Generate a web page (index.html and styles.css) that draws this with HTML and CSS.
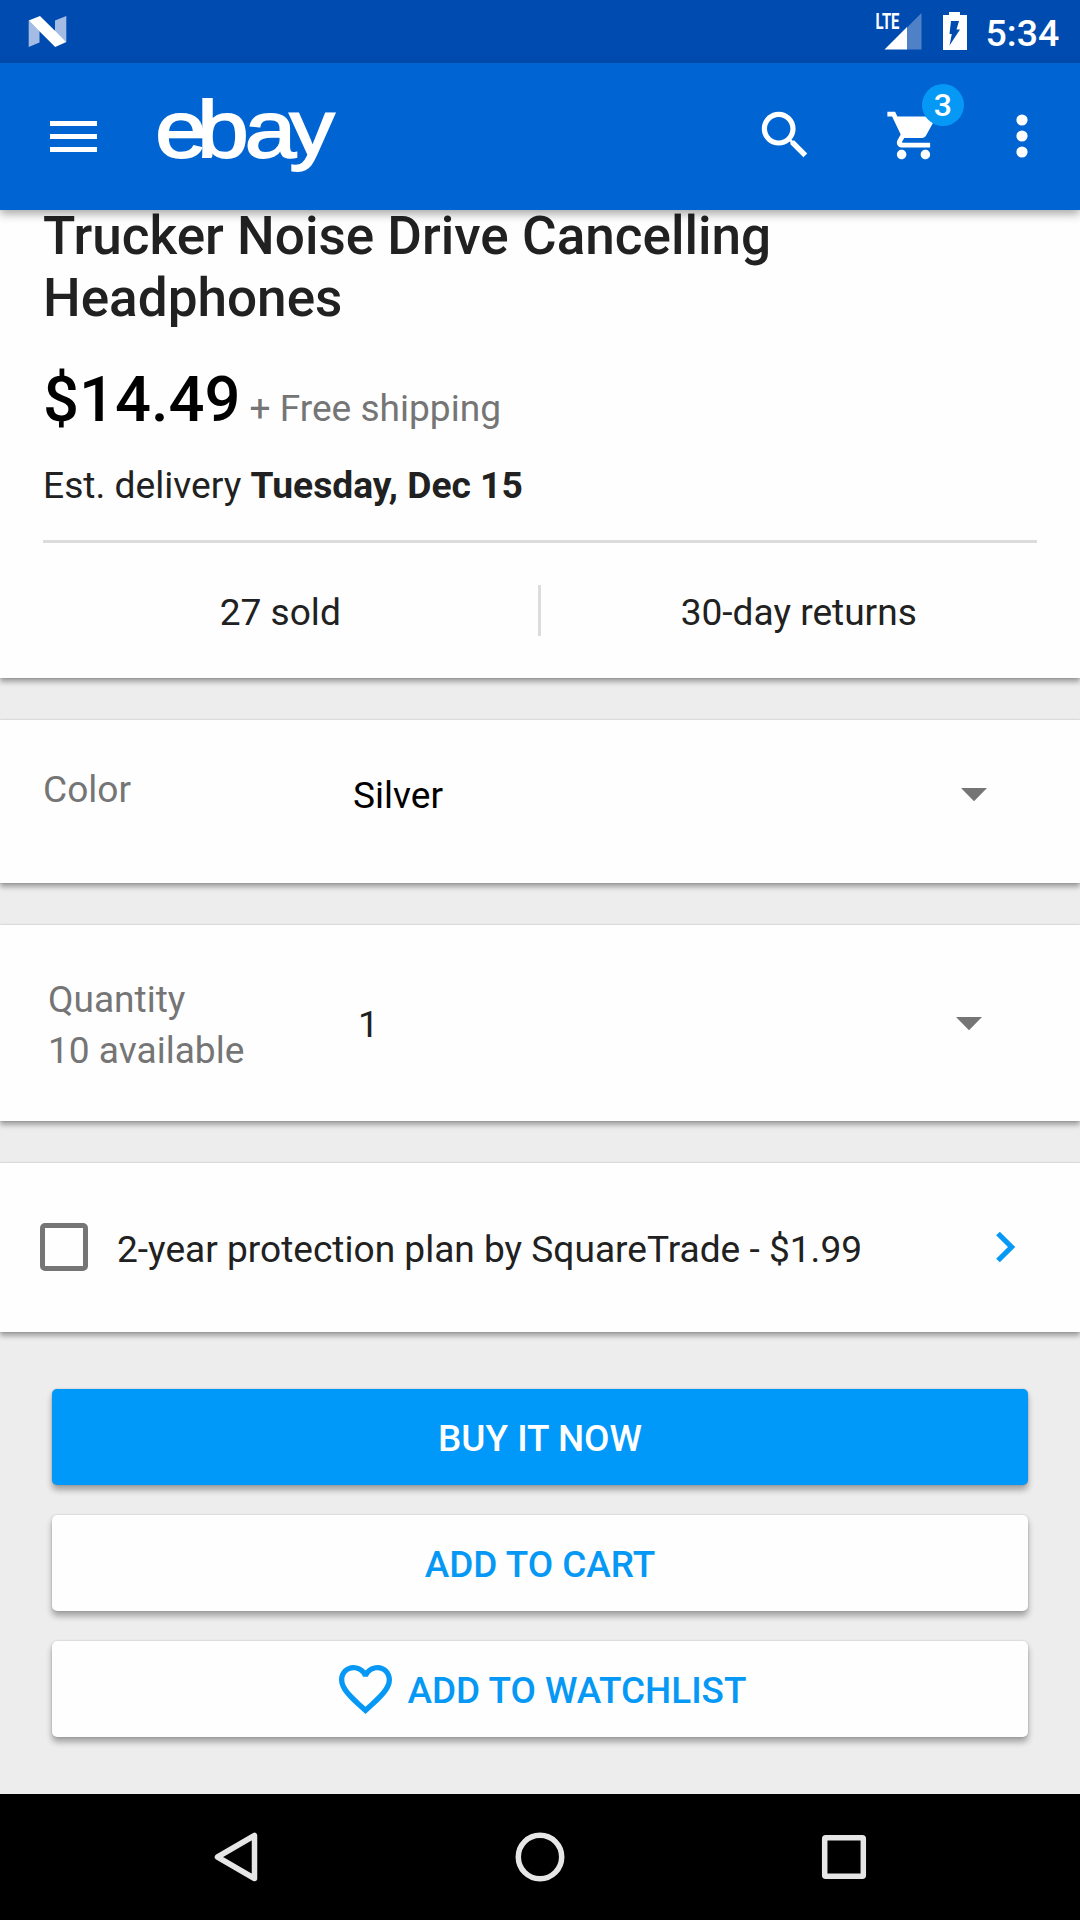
FILE: index.html
```html
<!DOCTYPE html>
<html lang="en">
<head>
<meta charset="utf-8">
<title>eBay item</title>
<link rel="stylesheet" href="styles.css">
</head>
<body>
<div class="status">
  <svg class="nougat" width="40" height="32" viewBox="0 0 40 32">
    <path d="M.7 4.5V31L11.5 26.500V15z" fill="#a4bce4"/>
    <path d="M38.300 0L27 4.500V16L38.300 26z" fill="#a4bce4"/>
    <path d="M.7 4.500L12 0L38.300 26L27.200 31z" fill="#fff"/>
  </svg>
  <svg class="signal" width="48" height="40" viewBox="0 0 48 40">
    <path d="M46.500 1V37.500H31V16.500z" fill="#4f81c7"/>
    <path d="M9.500 37.500L32 15V37.500z" fill="#fff"/>
    <text class="lte" x="0.500" y="17" textLength="24" lengthAdjust="spacingAndGlyphs">LTE</text>
  </svg>
  <svg class="battery" width="24" height="38" viewBox="0 0 24 38">
    <path d="M0 3H6V0H17V3H24V38H0z" fill="#fff"/>
    <path d="M8 9H16L13.500 17.500H17L6.500 33.500L8.800 22H6.500z" fill="#004bb0"/>
  </svg>
  <span class="clock">5:34</span>
</div>
<header class="appbar">
  <svg class="menu" width="48" height="32" viewBox="0 0 48 32"><path d="M0 0H47V5H0zM0 13H47V18H0zM0 26H47V31H0z" fill="#fff"/></svg>
  <svg class="logo" width="184" height="84" viewBox="0 0 184 84">
    <text class="wordmark" transform="scale(1.17 1)" x="-2.300 33.600 74.200 112.500" y="63.500 63.500 63.500 61.500">eba<tspan class="tail">y</tspan></text>
  </svg>
  <svg class="search" width="62.400" height="62.400" viewBox="0 0 24 24"><path fill="#fff" d="M15.500 14h-.79l-.28-.27C15.410 12.590 16 11.110 16 9.500 16 5.910 13.090 3 9.500 3S3 5.910 3 9.500 5.910 16 9.500 16c1.610 0 3.090-.59 4.230-1.570l.27.28v.79l5 4.990L20.490 19l-4.990-5zm-6 0C7.010 14 5 11.990 5 9.500S7.010 5 9.500 5 14 7.010 14 9.500 11.990 14 9.500 14z"/></svg>
  <div class="cart">
    <svg width="57" height="57" viewBox="0 0 24 24"><path fill="#fff" d="M7 18c-1.100 0-1.990.9-1.990 2S5.900 22 7 22s2-.9 2-2-.9-2-2-2zM1 2v2h2l3.600 7.590-1.350 2.450c-.16.280-.25.610-.25.960 0 1.100.9 2 2 2h12v-2H7.420c-.14 0-.25-.11-.25-.25l.03-.12.900-1.630h7.450c.75 0 1.410-.41 1.750-1.030l3.580-6.490c.08-.14.120-.31.120-.48 0-.55-.45-1-1-1H5.210l-.94-2H1zm16 16c-1.100 0-1.990.9-1.990 2s.89 2 1.990 2 2-.9 2-2-.9-2-2-2z"/></svg>
    <span class="badge">3</span>
  </div>
  <svg class="more" width="12" height="44" viewBox="0 0 12 44"><g fill="#fff"><circle cx="6" cy="6" r="5.600"/><circle cx="6" cy="22" r="5.600"/><circle cx="6" cy="38" r="5.600"/></g></svg>
</header>
<main>
  <section class="card summary">
    <h1>Trucker Noise Drive Cancelling<br>Headphones</h1>
    <p class="price"><b>$14.49</b><span>+ Free shipping</span></p>
    <p class="delivery">Est. delivery <b>Tuesday, Dec 15</b></p>
    <div class="stats"><span>27 sold</span><i></i><span>30-day returns</span></div>
  </section>
  <section class="card option color">
    <span class="label">Color</span><span class="value">Silver</span>
    <svg class="caret" width="26" height="14" viewBox="0 0 26 14"><path d="M0 0H26L13 13.300z" fill="#757575"/></svg>
  </section>
  <section class="card option quantity">
    <span class="label">Quantity<br>10 available</span><span class="value">1</span>
    <svg class="caret" width="26" height="14" viewBox="0 0 26 14"><path d="M0 0H26L13 13.300z" fill="#757575"/></svg>
  </section>
  <section class="card plan">
    <span class="box"></span>
    <span class="plan-text">2-year protection plan by SquareTrade - $1.99</span>
    <svg class="chevron" width="20" height="32" viewBox="0 0 20 32"><path d="M2 2.500L15.500 16L2 29.500" fill="none" stroke="#0698f5" stroke-width="5.200"/></svg>
  </section>
  <div class="actions">
    <button class="btn buy">BUY IT NOW</button>
    <button class="btn add">ADD TO CART</button>
    <button class="btn watch">
      <svg class="heart" width="53" height="49" viewBox="2 3 20 18.350" preserveAspectRatio="none"><path fill="#0698f5" d="M16.500 3c-1.740 0-3.410.81-4.500 2.090C10.910 3.810 9.240 3 7.500 3 4.420 3 2 5.420 2 8.500c0 3.780 3.400 6.860 8.550 11.540L12 21.350l1.450-1.320C18.600 15.360 22 12.280 22 8.500 22 5.420 19.580 3 16.500 3zm-4.400 15.550l-.1.100-.1-.1C7.140 14.240 4 11.390 4 8.500 4 6.500 5.500 5 7.500 5c1.540 0 3.040.99 3.570 2.360h1.870C13.460 5.990 14.960 5 16.500 5c2 0 3.500 1.500 3.500 3.500 0 2.890-3.140 5.740-7.900 10.050z"/></svg>
      <span>ADD TO WATCHLIST</span>
    </button>
  </div>
</main>
<nav class="navbar">
  <svg width="50" height="50" viewBox="0 0 50 50"><path d="M43.500 3.500V46.500L6.500 25z"/></svg>
  <svg width="50" height="50" viewBox="0 0 50 50"><circle cx="25" cy="25" r="21.700"/></svg>
  <svg width="50" height="50" viewBox="0 0 50 50"><rect x="5.700" y="5.700" width="38.600" height="38.600" rx="1"/></svg>
</nav>
</body>
</html>
```
FILE: styles.css
```css
* { box-sizing: border-box; }
body {
  margin: 0;
  width: 1080px;
  height: 1920px;
  overflow: hidden;
  display: flex;
  flex-direction: column;
  background: #ededed;
  font-family: Roboto, sans-serif;
  font-size: 37.100px;
  line-height: 42px;
  color: #212121;
}
h1, p { margin: 0; }
svg { display: block; flex: none; overflow: visible; }
span { white-space: nowrap; }

.status {
  height: 63px;
  flex: none;
  display: flex;
  align-items: flex-start;
  background: #004bb0;
  color: #fff;
}
.nougat { margin: 16px 0 0 28px; }
.signal { margin: 12px 0 0 807px; }
.lte { font: 700 22px Roboto, sans-serif; fill: #fff; }
.battery { margin: 12px 0 0 20px; }
.clock { margin: 11px 0 0 18.500px; font-size: 37.500px; font-weight: 500; line-height: 44px; }

.appbar {
  height: 147px;
  flex: none;
  display: flex;
  align-items: flex-start;
  position: relative;
  z-index: 2;
  background: #0064d3;
  box-shadow: 0 4px 9px rgba(0, 0, 0, .34);
}
.menu { margin: 58px 0 0 50px; }
.logo { margin: 30px 0 0 60px; }
.wordmark { font: 79px "Liberation Sans", sans-serif; fill: #fff; stroke: #fff; stroke-width: 1.900px; }
.tail { font-size: 77px; }
.search { margin: 41px 0 0 412px; }
.cart { position: relative; margin: 44px 0 0 69px; }
.badge {
  position: absolute;
  left: 36.500px;
  top: -23px;
  width: 42px;
  height: 42px;
  border-radius: 50%;
  background: #0698f5;
  color: #fff;
  font-size: 32px;
  font-weight: 500;
  line-height: 42px;
  text-align: center;
}
.more { margin: 51px 0 0 74px; }

.card {
  background: #fefefe;
  box-shadow: 0 4px 5px rgba(0, 0, 0, .32), 0 0 2px rgba(0, 0, 0, .2);
}
main { display: flow-root; flex: 1; }
.summary { display: flow-root; height: 468px; padding: 0 43px; margin-bottom: 42px; }
h1 { margin-top: -5px; font-size: 53.100px; font-weight: 500; line-height: 62px; }
.price { margin-top: 33px; height: 74px; line-height: 74px; display: flex; align-items: baseline; color: #757575; }
.price b { font-size: 63.300px; font-weight: 500; color: #000; }
.price span { margin-left: 9px; }
.delivery { margin-top: 28px; padding-bottom: 34px; border-bottom: 3px solid #dcdcdc; font-size: 37.200px; }
.stats { height: 135px; margin: 0 -21px 0 -22px; display: flex; align-items: center; }
.stats span { flex: 1; text-align: center; padding-top: 4px; }
.stats i { width: 3px; height: 51px; background: #dcdcdc; margin: 0 -1px 0 -2px; }

.option { display: grid; align-items: start; margin-bottom: 42px; }
.label { color: #757575; }
.color { height: 163px; grid-template-columns: 310px 1fr 26px; padding: 49px 93px 0 43px; }
.color .value { color: #000; margin-top: 6px; }
.color .caret { margin-top: 19px; }
.quantity { height: 196px; grid-template-columns: 310px 1fr 26px; padding: 49px 98px 0 48px; }
.quantity .label { line-height: 51px; }
.quantity .value { margin-top: 30px; }
.quantity .caret { margin-top: 43px; }
.plan { height: 169px; display: flex; align-items: center; padding: 0 64px 2px 40px; }
.box { width: 48px; height: 48px; border: 5.500px solid #757575; border-radius: 5px; }
.plan-text { margin: 7px auto 0 29px; }

.actions { padding: 57px 52px 0; display: grid; gap: 30px; }
.btn {
  height: 96px;
  border: 0;
  border-radius: 5px;
  padding: 3px 0 0;
  display: flex;
  justify-content: center;
  align-items: center;
  font: 500 36.900px/42px Roboto, sans-serif;
  background: #fefefe;
  color: #0698f5;
  box-shadow: 0 5px 6px rgba(0, 0, 0, .32), 0 0 2px rgba(0, 0, 0, .2);
}
.buy { background: #0099fa; color: #fff; }
.watch { padding-left: 5px; }
.heart { margin: -3px 16px 0 0; }

.navbar {
  height: 126px;
  flex: none;
  background: #000;
  display: flex;
  justify-content: space-between;
  align-items: center;
  padding: 0 211px;
}
.navbar svg { fill: none; stroke: #e6e6e6; stroke-width: 5.500px; stroke-linejoin: round; }
```
